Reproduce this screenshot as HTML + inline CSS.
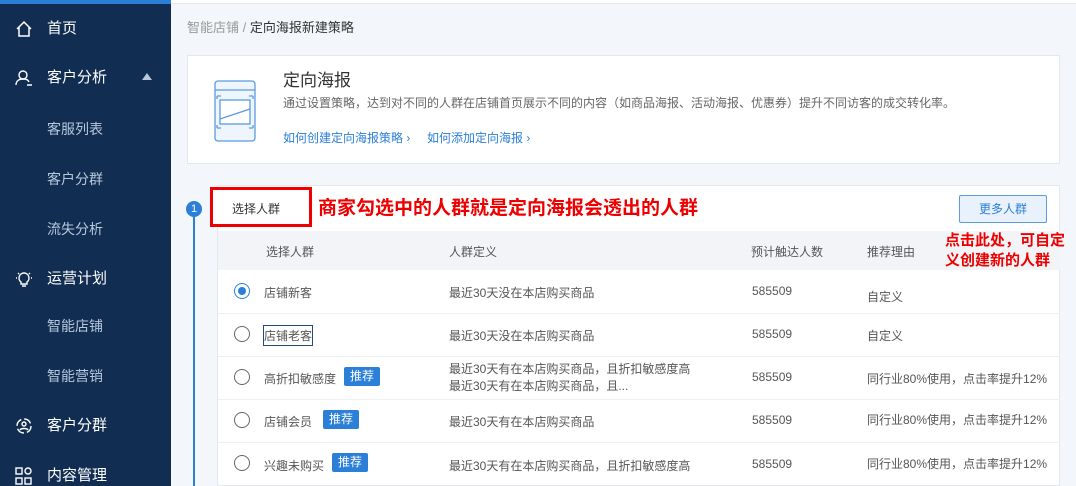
<!DOCTYPE html>
<html><head><meta charset="utf-8"><style>
*{margin:0;padding:0;box-sizing:border-box}
body{width:1076px;height:486px;overflow:hidden;background:#f3f6fa;font-family:"Liberation Sans","Noto Sans CJK SC",sans-serif;position:relative;color:#333}
.side{position:absolute;left:0;top:0;width:171px;height:486px;background:#112e52}
.side .it{position:absolute;left:47px;font-size:15px;color:#fff;line-height:18px}
.side .sub{position:absolute;left:47px;font-size:14px;color:#b8c7db;line-height:18px}
.side svg{position:absolute;left:14px}
.a{position:absolute}
.card{position:absolute;background:#fff;border:1px solid #e3e8ef}
.t{position:absolute;font-size:12px;color:#555;white-space:nowrap}
.radio{position:absolute;left:234px;width:16px;height:16px;border:1px solid #666;border-radius:50%;background:#fff}
.tag{position:absolute;background:#2b7fd6;color:#fff;font-size:12px;padding:0 6px;height:19px;line-height:19px;border-radius:2px}
.line{position:absolute;left:218px;width:842px;height:1px;background:#eceff3}
</style></head><body>
<div class="side">
<div class="a" style="left:0;top:0;width:171px;height:4px;background:#2b7fd6"></div>
<svg style="top:19px" width="20" height="20" viewBox="0 0 20 20" fill="none" stroke="#fff" stroke-width="1.5"><path d="M3 10L10 3L17 10M5 8V17H15V8"/></svg>
<div class="it" style="top:20px">首页</div>
<svg style="top:68px" width="20" height="20" viewBox="0 0 20 20" fill="none" stroke="#fff" stroke-width="1.4"><circle cx="9" cy="7" r="4"/><path d="M2 17c0-4 3-6 7-6s5 1 6 3M13 17h5"/></svg>
<div class="it" style="top:69px">客户分析</div>
<div class="a" style="left:142px;top:73px;width:0;height:0;border-left:5px solid transparent;border-right:5px solid transparent;border-bottom:7px solid #b8c7db"></div>
<div class="sub" style="top:120px">客服列表</div>
<div class="sub" style="top:170px">客户分群</div>
<div class="sub" style="top:220px">流失分析</div>
<svg style="top:269px" width="20" height="20" viewBox="0 0 20 20" fill="none" stroke="#fff" stroke-width="1.4"><path d="M10 4a5 5 0 0 0-3 9v2h6v-2a5 5 0 0 0-3-9zM8 17h4M2 9h1M17 9h1M4 4l1 1M16 4l-1 1"/></svg>
<div class="it" style="top:270px">运营计划</div>
<div class="sub" style="top:317px">智能店铺</div>
<div class="sub" style="top:367px">智能营销</div>
<svg style="top:416px" width="20" height="20" viewBox="0 0 20 20" fill="none" stroke="#fff" stroke-width="1.4"><circle cx="10" cy="10" r="7" stroke-dasharray="8 3"/><circle cx="10" cy="8" r="2"/><path d="M6 14c1-2 7-2 8 0"/></svg>
<div class="it" style="top:417px">客户分群</div>
<svg style="top:466px" width="20" height="20" viewBox="0 0 20 20" fill="none" stroke="#fff" stroke-width="1.4"><rect x="2" y="2" width="6" height="6"/><circle cx="14" cy="5" r="3"/><rect x="2" y="12" width="6" height="6"/><rect x="11" y="12" width="6" height="6"/></svg>
<div class="it" style="top:467px">内容管理</div>
</div>
<div class="a" style="left:171px;top:0;width:905px;height:4px;background:#fff;border-bottom:1px solid #e5e9ee"></div>
<div class="t" style="left:187px;top:17px;font-size:13px;color:#999">智能店铺 / <span style="color:#333">定向海报新建策略</span></div>

<div class="card" style="left:187px;top:55px;width:873px;height:109px"></div>
<svg class="a" style="left:214px;top:80px" width="42" height="62" viewBox="0 0 42 62" fill="none" stroke="#5b9be0" stroke-width="1.3"><rect x="1" y="1" width="40" height="60" rx="3" fill="#eef5fd"/><path d="M1 10H41"/><rect x="6" y="20" width="30" height="24" fill="#fff"/><path d="M6 39L36 29"/><path d="M3 16V19M3 16H7M39 16V19M35 16H39M3 48V45M3 48H7M39 48V45M35 48H39" /></svg>
<div class="t" style="left:283px;top:66px;font-size:17px;color:#333">定向海报</div>
<div class="t" style="left:283px;top:94px;color:#666">通过设置策略，达到对不同的人群在店铺首页展示不同的内容（如商品海报、活动海报、优惠券）提升不同访客的成交转化率。</div>
<div class="t" style="left:283px;top:129px;color:#2b7fd6">如何创建定向海报策略 ›&nbsp;&nbsp;&nbsp;&nbsp;&nbsp;如何添加定向海报 ›</div>

<div class="a" style="left:193px;top:208px;width:2px;height:278px;background:#2b7fd6"></div>
<div class="a" style="left:186px;top:201px;width:16px;height:16px;border-radius:50%;background:#2b7fd6;color:#fff;font-size:11px;text-align:center;line-height:16px">1</div>
<div class="card" style="left:217px;top:185px;width:843px;height:301px"></div>
<div class="a" style="left:218px;top:231px;width:842px;height:39px;background:#f2f4f7"></div>
<div class="a" style="left:210px;top:187px;width:102px;height:40px;border:3px solid #e00;background:#fff"></div>
<div class="t" style="left:232px;top:200px;color:#333">选择人群</div>
<div class="t" style="left:318px;top:193px;font-size:19px;font-weight:bold;color:#e00">商家勾选中的人群就是定向海报会透出的人群</div>
<div class="a" style="left:959px;top:195px;width:88px;height:28px;border:1px solid #5b9be0;background:#e9f2fc;border-radius:2px;color:#2b7fd6;font-size:12px;text-align:center;line-height:26px">更多人群</div>
<div class="t" style="left:945px;top:231px;font-size:15px;font-weight:bold;color:#e00;line-height:20px">点击此处，可自定<br>义创建新的人群</div>
<div class="t" style="left:266px;top:243px">选择人群</div>
<div class="t" style="left:449px;top:243px">人群定义</div>
<div class="t" style="left:751px;top:243px">预计触达人数</div>
<div class="t" style="left:867px;top:243px">推荐理由</div>

<div class="line" style="top:313px"></div><div class="line" style="top:356px"></div><div class="line" style="top:399px"></div><div class="line" style="top:442px"></div>

<div class="radio" style="top:283px;border-color:#2b7fd6"><div style="position:absolute;left:3px;top:3px;width:8px;height:8px;border-radius:50%;background:#2b7fd6"></div></div>
<div class="t" style="left:264px;top:284px">店铺新客</div>
<div class="t" style="left:449px;top:284px">最近30天没在本店购买商品</div>
<div class="t" style="left:752px;top:284px">585509</div>
<div class="t" style="left:867px;top:288px">自定义</div>

<div class="radio" style="top:326px"></div>
<div class="t" style="left:263px;top:325px;border:1px solid #1e4a80;padding:1px 0">店铺老客</div>
<div class="t" style="left:449px;top:327px">最近30天没在本店购买商品</div>
<div class="t" style="left:752px;top:327px">585509</div>
<div class="t" style="left:867px;top:327px">自定义</div>

<div class="radio" style="top:369px"></div>
<div class="t" style="left:264px;top:370px">高折扣敏感度</div>
<div class="tag" style="left:344px;top:367px">推荐</div>
<div class="t" style="left:449px;top:361px;line-height:17px">最近30天有在本店购买商品，且折扣敏感度高<br>最近30天有在本店购买商品，且...</div>
<div class="t" style="left:752px;top:370px">585509</div>
<div class="t" style="left:867px;top:370px">同行业80%使用，点击率提升12%</div>

<div class="radio" style="top:412px"></div>
<div class="t" style="left:264px;top:413px">店铺会员</div>
<div class="tag" style="left:323px;top:410px">推荐</div>
<div class="t" style="left:449px;top:413px">最近30天有在本店购买商品</div>
<div class="t" style="left:752px;top:413px">585509</div>
<div class="t" style="left:867px;top:411px">同行业80%使用，点击率提升12%</div>

<div class="radio" style="top:455px"></div>
<div class="t" style="left:264px;top:457px">兴趣未购买</div>
<div class="tag" style="left:332px;top:453px">推荐</div>
<div class="t" style="left:449px;top:457px">最近30天有在本店购买商品，且折扣敏感度高</div>
<div class="t" style="left:752px;top:457px">585509</div>
<div class="t" style="left:867px;top:455px">同行业80%使用，点击率提升12%</div>
</body></html>
